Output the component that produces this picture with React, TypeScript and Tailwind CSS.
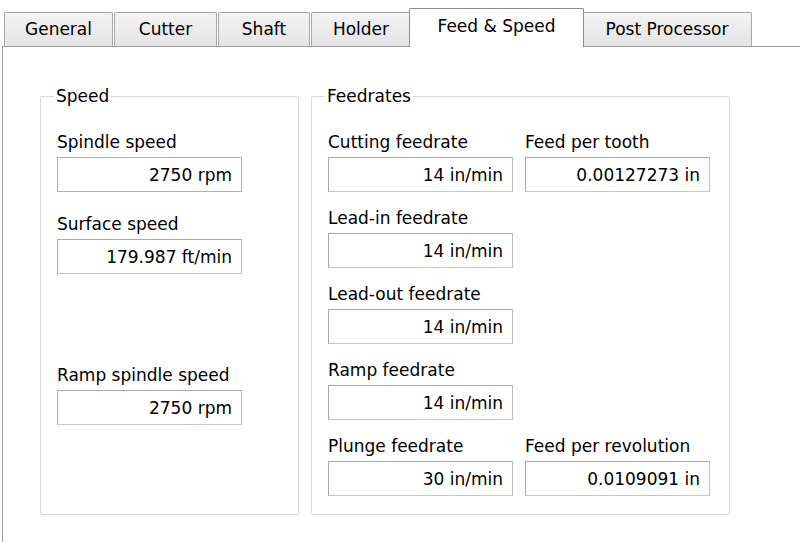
const font = { fontFamily: '"DejaVu Sans", Tahoma, sans-serif' };

interface Field { label: string; value: string; focus?: boolean; }

function Input({ f }: { f: Field }) {
  return (
    <div className="flex flex-col">
      <div className="h-[22px] pt-[2px] leading-[22px] text-[17px] text-black whitespace-nowrap">{f.label}</div>
      <div
        className={
          "mt-[6px] h-[35px] w-[185px] border px-[9px] pt-[2px] flex items-center justify-end text-[17px] text-black bg-white " +
          (f.focus ? "border-[#8cb8e8]" : "border-[#a9a9a9] border-b-[#c6c6c6] border-r-[#bdbdbd]")
        }
      >
        {f.value}
      </div>
    </div>
  );
}

function Group({ title, className, children }: { title: string; className: string; children: React.ReactNode }) {
  return (
    <div className={"relative border border-[#d9d9d9] rounded-[2px] " + className}>
      <div className="absolute -top-[12px] left-[13px] px-[2px] bg-white h-[22px] leading-[22px] text-[17px] text-black">{title}</div>
      {children}
    </div>
  );
}

const TABS = [
  { t: "General", w: 109 },
  { t: "Cutter", w: 103 },
  { t: "Shaft", w: 92 },
  { t: "Holder", w: 100 },
  { t: "Feed & Speed", w: 175, active: true },
  { t: "Post Processor", w: 170 },
];

export default function App() {
  return (
    <div className="w-[800px] h-[542px] bg-white overflow-hidden flex flex-col" style={font}>
      <div className="flex items-end h-[46px] pl-[4px] gap-[1px]">
        {TABS.map((tab) =>
          tab.active ? (
            <div
              key={tab.t}
              className="relative z-10 -mx-[3px] -mb-[1px] h-[39px] border border-b-0 border-[#898c95] bg-white flex items-center justify-center pb-[3px] text-[17px] text-black rounded-t-[2px]"
              style={{ width: tab.w }}
            >
              {tab.t}
            </div>
          ) : (
            <div
              key={tab.t}
              className="h-[34px] border border-b-0 border-[#a7a7a7] bg-gradient-to-b from-[#f3f3f3] to-[#e4e4e4] flex items-center justify-center pt-[1px] text-[17px] text-black rounded-t-[2px]"
              style={{ width: tab.w }}
            >
              {tab.t}
            </div>
          )
        )}
      </div>
      <div className="flex-1 ml-[2px] border-l border-t border-[#a0a0a0] pl-[37px] pt-[49px] flex gap-[12px]">
        <Group title="Speed" className="w-[259px] h-[419px] pl-[16px] pt-[32px]">
          <Input f={{ label: "Spindle speed", value: "2750 rpm", focus: true }} />
          <div className="mt-[19px]">
            <Input f={{ label: "Surface speed", value: "179.987 ft/min" }} />
          </div>
          <div className="mt-[88px]">
            <Input f={{ label: "Ramp spindle speed", value: "2750 rpm" }} />
          </div>
        </Group>
        <Group title="Feedrates" className="w-[419px] h-[419px] pl-[16px] pt-[32px]">
          <div className="flex flex-col gap-[13px]">
            <div className="flex gap-[12px]">
              <Input f={{ label: "Cutting feedrate", value: "14 in/min" }} />
              <Input f={{ label: "Feed per tooth", value: "0.00127273 in" }} />
            </div>
            <Input f={{ label: "Lead-in feedrate", value: "14 in/min" }} />
            <Input f={{ label: "Lead-out feedrate", value: "14 in/min" }} />
            <Input f={{ label: "Ramp feedrate", value: "14 in/min" }} />
            <div className="flex gap-[12px]">
              <Input f={{ label: "Plunge feedrate", value: "30 in/min" }} />
              <Input f={{ label: "Feed per revolution", value: "0.0109091 in" }} />
            </div>
          </div>
        </Group>
      </div>
    </div>
  );
}
